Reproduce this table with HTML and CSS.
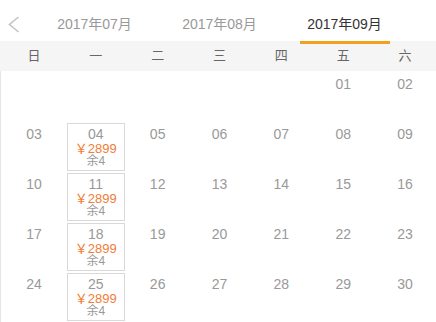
FILE: index.html
```html
<!DOCTYPE html>
<html>
<head>
<meta charset="utf-8">
<link rel="stylesheet" href="styles.css">
</head>
<body>
<div class="cal">
  <div class="tabs">
    <div class="arrow">
      <svg width="32" height="41" viewBox="0 0 32 41"><polyline points="18.5,17 9.5,24.5 18.5,32" fill="none" stroke="#c4c4c4" stroke-width="1.6"/></svg>
    </div>
    <div class="tab">2017年07月</div>
    <div class="tab">2017年08月</div>
    <div class="tab active">2017年09月</div>
  </div>
  <div class="week">
    <div>日</div><div>一</div><div>二</div><div>三</div><div>四</div><div>五</div><div>六</div>
  </div>
  <div class="days">
    <div class="cell"></div><div class="cell"></div><div class="cell"></div><div class="cell"></div><div class="cell"></div>
    <div class="cell"><div class="day"><div class="d">01</div></div></div>
    <div class="cell"><div class="day"><div class="d">02</div></div></div>

    <div class="cell"><div class="day"><div class="d">03</div></div></div>
    <div class="cell"><div class="day on"><div class="d">04</div><div class="p">￥2899</div><div class="r">余4</div></div></div>
    <div class="cell"><div class="day"><div class="d">05</div></div></div>
    <div class="cell"><div class="day"><div class="d">06</div></div></div>
    <div class="cell"><div class="day"><div class="d">07</div></div></div>
    <div class="cell"><div class="day"><div class="d">08</div></div></div>
    <div class="cell"><div class="day"><div class="d">09</div></div></div>

    <div class="cell"><div class="day"><div class="d">10</div></div></div>
    <div class="cell"><div class="day on"><div class="d">11</div><div class="p">￥2899</div><div class="r">余4</div></div></div>
    <div class="cell"><div class="day"><div class="d">12</div></div></div>
    <div class="cell"><div class="day"><div class="d">13</div></div></div>
    <div class="cell"><div class="day"><div class="d">14</div></div></div>
    <div class="cell"><div class="day"><div class="d">15</div></div></div>
    <div class="cell"><div class="day"><div class="d">16</div></div></div>

    <div class="cell"><div class="day"><div class="d">17</div></div></div>
    <div class="cell"><div class="day on"><div class="d">18</div><div class="p">￥2899</div><div class="r">余4</div></div></div>
    <div class="cell"><div class="day"><div class="d">19</div></div></div>
    <div class="cell"><div class="day"><div class="d">20</div></div></div>
    <div class="cell"><div class="day"><div class="d">21</div></div></div>
    <div class="cell"><div class="day"><div class="d">22</div></div></div>
    <div class="cell"><div class="day"><div class="d">23</div></div></div>

    <div class="cell"><div class="day"><div class="d">24</div></div></div>
    <div class="cell"><div class="day on"><div class="d">25</div><div class="p">￥2899</div><div class="r">余4</div></div></div>
    <div class="cell"><div class="day"><div class="d">26</div></div></div>
    <div class="cell"><div class="day"><div class="d">27</div></div></div>
    <div class="cell"><div class="day"><div class="d">28</div></div></div>
    <div class="cell"><div class="day"><div class="d">29</div></div></div>
    <div class="cell"><div class="day"><div class="d">30</div></div></div>
  </div>
</div>
</body>
</html>
```

FILE: styles.css
```css
html, body {
  margin: 0;
  padding: 0;
  background: #fff;
}
body {
  width: 436px;
  height: 322px;
  overflow: hidden;
  font-family: "Liberation Sans", "Noto Sans CJK SC", sans-serif;
}
.cal {
  width: 436px;
}
.tabs {
  display: flex;
  height: 41px;
}
.arrow {
  width: 32px;
  height: 41px;
}
.arrow svg {
  display: block;
}
.tab {
  position: relative;
  width: 125px;
  text-align: center;
  font-size: 14px;
  line-height: 18px;
  padding-top: 15px;
  color: #999;
}
.tab.active {
  color: #333;
}
.tab.active::after {
  content: "";
  position: absolute;
  left: 18px;
  right: 17px;
  bottom: -3px;
  height: 3px;
  background: #f0a21b;
  z-index: 2;
}
.week {
  display: grid;
  grid-template-columns: repeat(7, 1fr);
  height: 30px;
  background: #f5f5f5;
  padding-left: 3px;
}
.week div {
  text-align: center;
  line-height: 30px;
  font-size: 13px;
  color: #666;
}
.days {
  display: grid;
  grid-template-columns: repeat(7, 1fr);
  grid-auto-rows: 50px;
  border-left: 1px solid #e6e6e6;
  padding-top: 1px;
  padding-left: 2px;
}
.cell {
  padding: 1px 2px;
}
.day {
  box-sizing: border-box;
  height: 48px;
  border: 1px solid transparent;
  padding-top: 2px;
  text-align: center;
}
.day.on {
  border-color: #d9d9d9;
}
.d {
  font-size: 14px;
  line-height: 16px;
  color: #999;
}
.p {
  font-size: 13px;
  line-height: 13px;
  color: #f07d36;
}
.r {
  font-size: 12px;
  line-height: 13px;
  color: #999;
}
```
